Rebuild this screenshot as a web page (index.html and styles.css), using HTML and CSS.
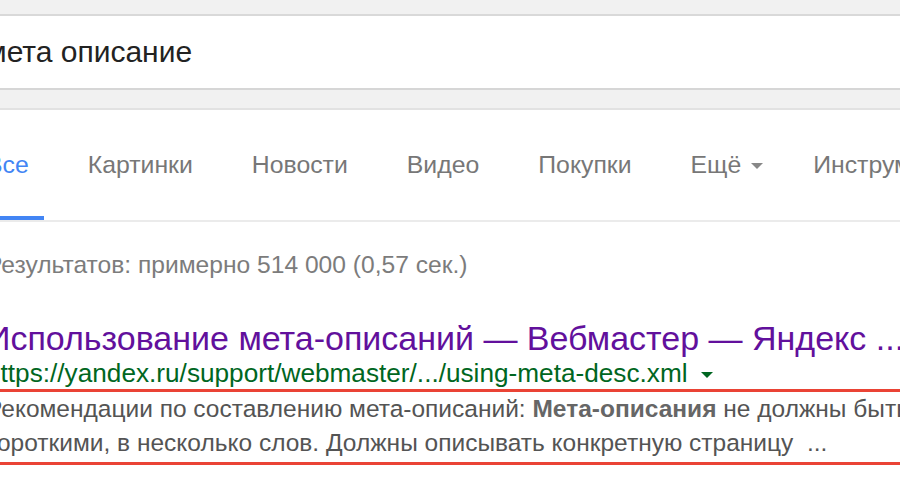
FILE: index.html
```html
<!DOCTYPE html>
<html lang="ru">
<head>
<meta charset="utf-8">
<title>мета описание</title>
<link rel="stylesheet" href="styles.css">
</head>
<body>
<header class="header">
  <div class="searchbox">
    <span class="query">мета описание</span>
  </div>
</header>
<nav class="tabs">
  <a class="tab active">Все</a>
  <a class="tab">Картинки</a>
  <a class="tab">Новости</a>
  <a class="tab">Видео</a>
  <a class="tab">Покупки</a>
  <a class="tab more">Ещё <svg class="caret" width="12" height="6" viewBox="0 0 12 6"><path d="M0 0h12L6 6z" fill="#888"/></svg></a>
  <a class="tab">Инструменты</a>
</nav>
<main class="content">
  <div class="stats">Результатов: примерно 514 000 (0,57 сек.)</div>
  <div class="result">
    <h3 class="title">Использование мета-описаний — Вебмастер — Яндекс ...</h3>
    <div class="url">https://yandex.ru/support/webmaster/.../using-meta-desc.xml <svg class="url-caret" width="12" height="6" viewBox="0 0 12 6"><path d="M0 0h12L6 6z" fill="#006621"/></svg></div>
    <div class="snippet-box">
      <p class="snippet">Рекомендации по составлению мета-описаний: <b>Мета-описания</b> не должны быть<br>короткими, в несколько слов. Должны описывать конкретную страницу&nbsp; ...</p>
    </div>
  </div>
</main>
</body>
</html>
```

FILE: styles.css
```css
html, body {
  margin: 0;
  padding: 0;
  background: #fff;
  overflow: hidden;
  font-family: Arial, "Liberation Sans", sans-serif;
}

.header {
  background: #f1f1f1;
  padding: 14px 0 18px;
  border-bottom: 2px solid #e2e2e2;
}

.searchbox {
  background: #fff;
  border-top: 2px solid #d9d9d9;
  border-bottom: 2px solid #d6d6d6;
  height: 72px;
  line-height: 72px;
  white-space: nowrap;
  overflow: hidden;
}

.query {
  display: inline-block;
  margin-left: -14px;
  font-size: 30px;
  color: #222;
}

.tabs {
  display: flex;
  white-space: nowrap;
  border-bottom: 2px solid #ebebeb;
  margin-left: -29px;
}

.tab {
  display: block;
  padding: 40px 15px 36px;
  margin-right: 29px;
  font-size: 24.8px;
  line-height: 30px;
  color: #777;
  border-bottom: 4px solid transparent;
}

.tab.more {
  margin-right: 20px;
}

.tab.active {
  color: #4285f4;
  border-bottom-color: #4285f4;
}

.caret {
  margin-left: 3px;
  vertical-align: middle;
}

.content {
  margin-left: -14px;
  white-space: nowrap;
}

.stats {
  margin-top: 28px;
  font-size: 24.6px;
  line-height: 30px;
  color: #7c7c7c;
}

.result {
  margin-top: 39px;
}

.title {
  margin: 0;
  font-weight: normal;
  font-size: 34px;
  line-height: 39px;
  color: #62109c;
}

.url {
  font-size: 26.2px;
  line-height: 30px;
  color: #006621;
}

.url-caret {
  margin-left: 6px;
  vertical-align: middle;
}

.snippet-box {
  margin: 1px -40px 0 -40px;
  padding: 0 40px 2px;
  border-top: 3px solid #ea4335;
  border-bottom: 3px solid #ea4335;
}

.snippet {
  margin: 0;
  font-size: 24.5px;
  line-height: 34px;
  color: #545454;
}

.snippet b {
  color: #666;
}
```
